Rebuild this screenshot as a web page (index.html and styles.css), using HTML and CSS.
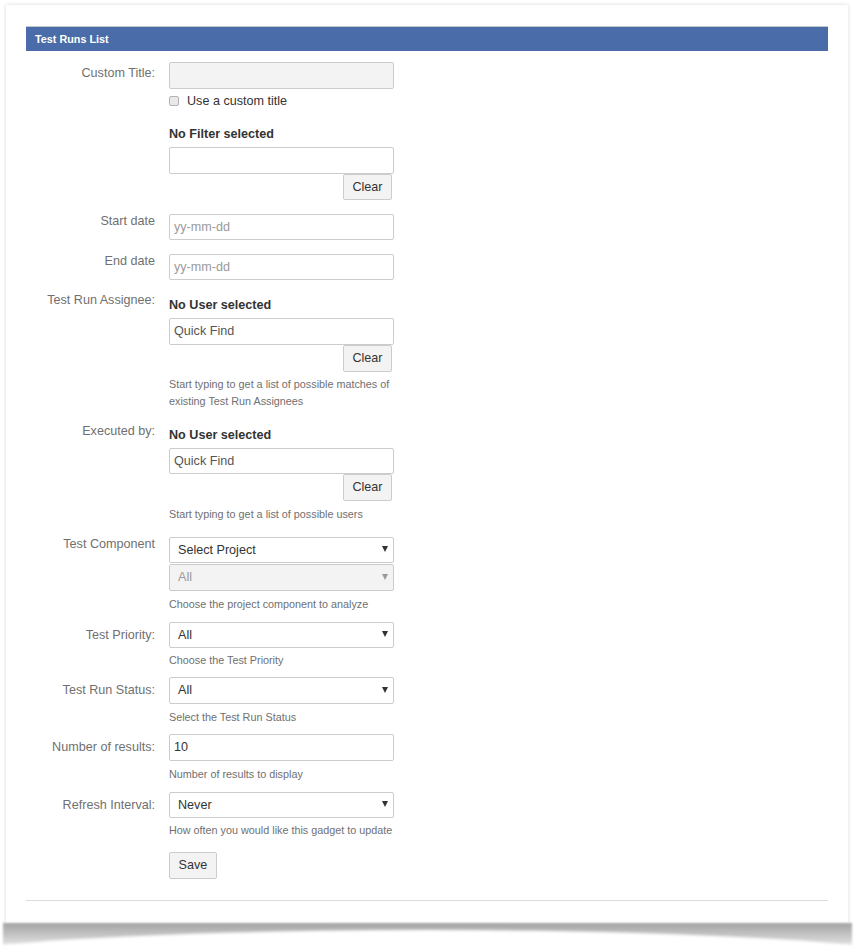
FILE: index.html
```html
<!DOCTYPE html>
<html lang="en">
<head>
<meta charset="utf-8">
<title>Test Runs List</title>
<link rel="stylesheet" href="styles.css">
</head>
<body>
<div class="page">
  <div class="card">
    <div class="gadget-head">Test Runs List</div>
    <form class="form">
      <div class="row">
        <label class="lbl lo-p1">Custom Title:</label>
        <div class="field">
          <input class="ctl ctl-disabled" type="text" disabled>
          <label class="check"><span class="box"></span>Use a custom title</label>
        </div>
      </div>

      <div class="row mt-135">
        <span class="lbl"></span>
        <div class="field">
          <div class="sel-title">No Filter selected</div>
          <input class="ctl mt-3" type="text">
          <button class="btn btn-clear" type="button">Clear</button>
        </div>
      </div>

      <div class="row mt-135">
        <label class="lbl lo-m25">Start date</label>
        <div class="field">
          <input class="ctl" type="text" placeholder="yy-mm-dd">
        </div>
      </div>

      <div class="row mt-135">
        <label class="lbl lo-m25">End date</label>
        <div class="field">
          <input class="ctl" type="text" placeholder="yy-mm-dd">
        </div>
      </div>

      <div class="row mt-145">
        <label class="lbl lo-m45">Test Run Assignee:</label>
        <div class="field">
          <div class="sel-title">No User selected</div>
          <input class="ctl mt-35" type="text" value="Quick Find">
          <button class="btn btn-clear mt-05" type="button">Clear</button>
          <div class="help mt-45">Start typing to get a list of possible matches of existing Test Run Assignees</div>
        </div>
      </div>

      <div class="row mt-15">
        <label class="lbl lo-m45">Executed by:</label>
        <div class="field">
          <div class="sel-title">No User selected</div>
          <input class="ctl mt-25" type="text" value="Quick Find">
          <button class="btn btn-clear" type="button">Clear</button>
          <div class="help mt-5">Start typing to get a list of possible users</div>
        </div>
      </div>

      <div class="row mt-14">
        <label class="lbl lo-m25">Test Component</label>
        <div class="field">
          <div class="select-wrap">
            <select class="ctl sel"><option>Select Project</option></select>
            <span class="arrow"></span>
          </div>
          <div class="select-wrap mt-1">
            <select class="ctl sel sel-disabled" disabled><option>All</option></select>
            <span class="arrow arrow-disabled"></span>
          </div>
          <div class="help mt-5">Choose the project component to analyze</div>
        </div>
      </div>

      <div class="row mt-9">
        <label class="lbl lo-p3">Test Priority:</label>
        <div class="field">
          <div class="select-wrap">
            <select class="ctl sel"><option>All</option></select>
            <span class="arrow"></span>
          </div>
          <div class="help mt-4">Choose the Test Priority</div>
        </div>
      </div>

      <div class="row mt-8">
        <label class="lbl lo-p3">Test Run Status:</label>
        <div class="field">
          <div class="select-wrap">
            <select class="ctl sel"><option>All</option></select>
            <span class="arrow"></span>
          </div>
          <div class="help mt-5">Select the Test Run Status</div>
        </div>
      </div>

      <div class="row mt-85">
        <label class="lbl lo-p3">Number of results:</label>
        <div class="field">
          <input class="ctl ctl-dark" type="text" value="10">
          <div class="help mt-5">Number of results to display</div>
        </div>
      </div>

      <div class="row mt-9">
        <label class="lbl lo-p3">Refresh Interval:</label>
        <div class="field">
          <div class="select-wrap">
            <select class="ctl sel"><option>Never</option></select>
            <span class="arrow"></span>
          </div>
          <div class="help mt-4">How often you would like this gadget to update</div>
        </div>
      </div>

      <div class="row mt-13">
        <span class="lbl"></span>
        <div class="field">
          <button class="btn btn-save" type="button">Save</button>
        </div>
      </div>
    </form>
    <div class="rule"></div>
  </div>
</div>
</body>
</html>
```

FILE: styles.css
```css
html, body {
  margin: 0;
  background: #ffffff;
}

body {
  font-family: "Liberation Sans", Arial, sans-serif;
  color: #333333;
}

.page {
  position: relative;
  overflow: hidden;
  height: 952px;
  box-sizing: border-box;
  padding: 5px 14px 0 6px;
}

.card {
  position: relative;
  width: 842px;
  box-sizing: border-box;
  padding: 21px 20px 21.7px;
  background: #ffffff;
  box-shadow: 0 0 4px rgba(0, 0, 0, 0.16);
}

.card::before {
  content: "";
  position: absolute;
  left: -3px;
  right: -4px;
  top: 100%;
  height: 24px;
  background: linear-gradient(#a3a3a3, #c8c8c8 55%, #e8e8e8);
  filter: blur(1.2px);
}

.card::after {
  content: "";
  position: absolute;
  left: -15%;
  right: -15%;
  top: calc(100% + 7px);
  height: 80px;
  border-radius: 50%;
  background: #ffffff;
  filter: blur(1.5px);
}

.gadget-head {
  height: 25px;
  box-sizing: border-box;
  border-top: 1px solid #c3c6cc;
  background: #4a6ca8;
  color: #ffffff;
  font-weight: bold;
  font-size: 10.8px;
  line-height: 24px;
  padding-left: 9px;
}

.form {
  margin-top: 11px;
}

.row {
  display: flex;
  align-items: flex-start;
}

.lbl {
  flex: none;
  width: 129px;
  margin-right: 14px;
  text-align: right;
  font-size: 12.6px;
  line-height: 20px;
  color: #707070;
}

.field {
  flex: none;
  width: 225px;
  display: flex;
  flex-direction: column;
}

.ctl {
  display: block;
  box-sizing: border-box;
  width: 225px;
  height: 26.5px;
  margin: 0;
  padding: 0 4px;
  border: 1px solid #cccccc;
  border-radius: 2px;
  background: #ffffff;
  font-family: "Liberation Sans", Arial, sans-serif;
  font-size: 12.6px;
  color: #555555;
  outline: none;
}

.ctl::placeholder {
  color: #9a9a9a;
}

.ctl-disabled {
  background: #f3f3f3;
}

.ctl-dark {
  color: #333333;
}

.select-wrap {
  position: relative;
}

.sel {
  -webkit-appearance: none;
  appearance: none;
  padding-left: 8px;
  color: #333333;
}

.sel-disabled {
  background: #f3f3f3;
  color: #9a9a9a;
  opacity: 1;
}

.arrow {
  position: absolute;
  right: 6px;
  top: 9.5px;
  width: 0;
  height: 0;
  border-left: 3px solid transparent;
  border-right: 3px solid transparent;
  border-top: 6px solid #333333;
}

.arrow-disabled {
  border-top-color: #9a9a9a;
}

.check {
  display: flex;
  align-items: center;
  margin-top: 2px;
  height: 20px;
  font-size: 12.6px;
  color: #333333;
}

.box {
  width: 9.5px;
  height: 10px;
  box-sizing: border-box;
  margin-right: 8.5px;
  border: 1px solid #b3b3b3;
  border-radius: 2px;
  background: #e9e9e9;
}

.sel-title {
  font-weight: bold;
  font-size: 12.6px;
  line-height: 20px;
  color: #333333;
}

.btn {
  box-sizing: border-box;
  height: 26.5px;
  padding: 0 8.5px;
  border: 1px solid #cccccc;
  border-radius: 2px;
  background: #f3f3f3;
  font-family: "Liberation Sans", Arial, sans-serif;
  font-size: 12.6px;
  color: #333333;
}

.btn-clear {
  align-self: flex-end;
  margin-right: 2px;
}

.btn-save {
  align-self: flex-start;
}

.help {
  font-size: 10.8px;
  line-height: 17px;
  color: #707070;
}

.rule {
  height: 1px;
  margin-top: 21.5px;
  background: #dcdcdc;
}

/* vertical rhythm helpers */
.mt-05 { margin-top: 0.5px; }
.mt-1 { margin-top: 1px; }
.mt-25 { margin-top: 2.5px; }
.mt-3 { margin-top: 3px; }
.mt-35 { margin-top: 3.5px; }
.mt-4 { margin-top: 4px; }
.mt-45 { margin-top: 4.5px; }
.mt-5 { margin-top: 5px; }
.mt-8 { margin-top: 8px; }
.mt-85 { margin-top: 8.5px; }
.mt-9 { margin-top: 9px; }
.mt-13 { margin-top: 13px; }
.mt-135 { margin-top: 13.5px; }
.mt-14 { margin-top: 14px; }
.mt-145 { margin-top: 14.5px; }
.mt-15 { margin-top: 15px; }

/* label offsets */
.lo-p1 { margin-top: 1px; }
.lo-p3 { margin-top: 3px; }
.lo-m25 { margin-top: -2.5px; }
.lo-m45 { margin-top: -4.5px; }
```
